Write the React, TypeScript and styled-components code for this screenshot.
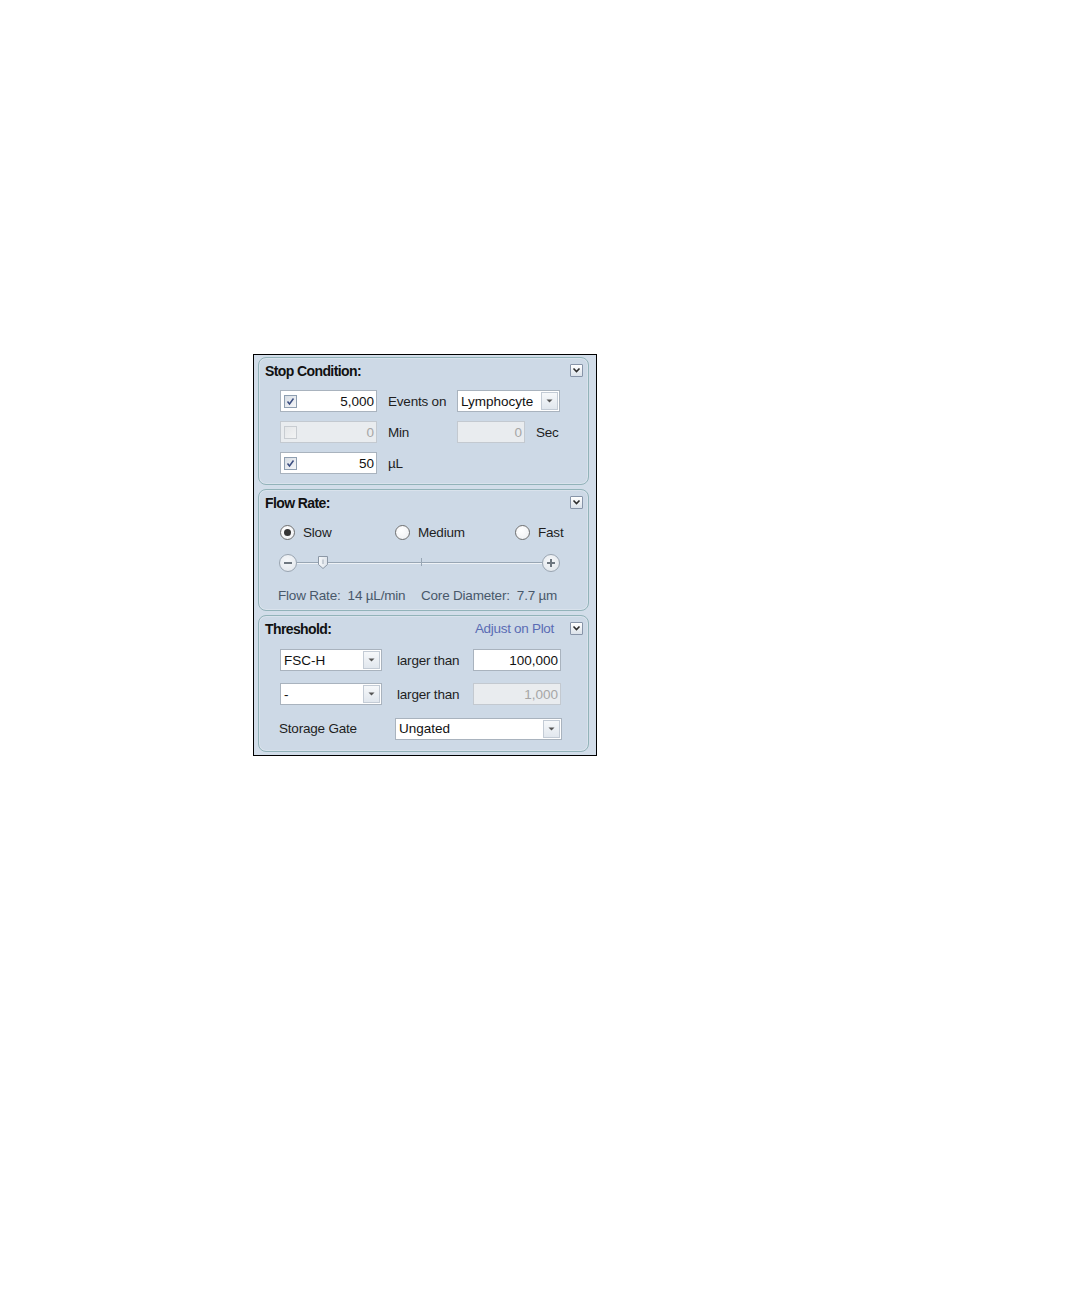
import React from 'react'
import styled, { createGlobalStyle } from 'styled-components'

const GlobalStyle = createGlobalStyle`
  html, body {
    margin: 0;
    padding: 0;
    background: #ffffff;
  }
  body {
    font-family: "Liberation Sans", Arial, sans-serif;
    font-size: 13.5px;
    color: #1e1e1e;
  }
`

const Page = styled.div`
  padding: 354px 0 0 253px;
  width: 1080px;
  height: 1296px;
  box-sizing: border-box;
`

const Panel = styled.div`
  width: 344px;
  box-sizing: border-box;
  border: 1px solid #000;
  background: #d2dde9;
  padding: 2px 7px 3px 4px;
  display: flex;
  flex-direction: column;
  gap: 4px;
`

const Section = styled.section<{ $h: number }>`
  height: ${(p) => p.$h}px;
  box-sizing: border-box;
  border: 1px solid #92b3b9;
  border-radius: 8px;
  background: #cdd9e6;
  box-shadow: inset 0 0 0 1px rgba(255, 255, 255, 0.25);
  padding: 3px 5px 0 6px;
  display: flex;
  flex-direction: column;
`

const Header = styled.div`
  height: 19px;
  display: flex;
  align-items: center;
  justify-content: space-between;
`

const Title = styled.div`
  font-size: 14px;
  font-weight: 700;
  letter-spacing: -0.6px;
  color: #111;
`

const HeaderRight = styled.div`
  display: flex;
  align-items: center;
  gap: 16px;
`

const LinkText = styled.span`
  color: #5a6cb4;
  font-size: 13.5px;
  letter-spacing: -0.3px;
`

const CollapseBtn = styled.div`
  width: 13px;
  height: 13px;
  box-sizing: border-box;
  border: 1px solid #8794a8;
  border-radius: 1px;
  background: linear-gradient(#ffffff, #dbe2ea);
  display: flex;
  align-items: center;
  justify-content: center;
`

const Rows = styled.div<{ $top: number; $gap: number }>`
  margin-top: ${(p) => p.$top}px;
  padding-left: 15px;
  display: flex;
  flex-direction: column;
  gap: ${(p) => p.$gap}px;
`

const StopRow = styled.div`
  height: 22px;
  display: grid;
  grid-template-columns: 97px 58px auto auto;
  column-gap: 11px;
  align-items: center;
  justify-content: start;
`

const Label = styled.span`
  white-space: pre;
  color: #1e1e1e;
  letter-spacing: -0.2px;
`

const TextBox = styled.div<{ $w: number; $disabled?: boolean }>`
  width: ${(p) => p.$w}px;
  height: 22px;
  box-sizing: border-box;
  border: 1px solid ${(p) => (p.$disabled ? '#c3c9d0' : '#a9b3be')};
  background: ${(p) => (p.$disabled ? '#e9ecef' : '#ffffff')};
  color: ${(p) => (p.$disabled ? '#a6a6a6' : '#111')};
  display: flex;
  align-items: center;
  padding: 0 2px 0 3px;
  gap: 4px;
`

const Value = styled.span`
  flex: 1;
  text-align: right;
`

const Check = styled.div<{ $disabled?: boolean }>`
  width: 13px;
  height: 13px;
  box-sizing: border-box;
  border: 1px solid ${(p) => (p.$disabled ? '#c8ccd1' : '#8f9fb1')};
  background: ${(p) =>
    p.$disabled ? 'linear-gradient(135deg, #e4e6e8, #f2f3f4)' : 'linear-gradient(135deg, #d7dde4, #f6f7f9)'};
  display: flex;
  align-items: center;
  justify-content: center;
`

const Combo = styled.div<{ $w: number }>`
  width: ${(p) => p.$w}px;
  height: 22px;
  box-sizing: border-box;
  border: 1px solid #a9b3be;
  background: #fff;
  display: flex;
  align-items: center;
  padding: 1px 1px 1px 3px;
  color: #111;
`

const ComboText = styled.span`
  flex: 1;
  white-space: nowrap;
`

const ComboBtn = styled.div`
  width: 17px;
  height: 18px;
  box-sizing: border-box;
  border: 1px solid #c3cbd5;
  background: linear-gradient(#f6f8fa, #e1e7ee);
  display: flex;
  align-items: center;
  justify-content: center;
`

const RadioRow = styled.div`
  margin-top: 11px;
  padding-left: 15px;
  height: 18px;
  display: grid;
  grid-template-columns: 115px 120px auto;
  align-items: center;
`

const RadioItem = styled.label`
  display: flex;
  align-items: center;
  gap: 8px;
`

const RadioCircle = styled.div<{ $on?: boolean }>`
  width: 15px;
  height: 15px;
  box-sizing: border-box;
  border-radius: 50%;
  border: 1px solid #6f6f6f;
  background: radial-gradient(circle at 40% 35%, #ffffff, #eceef1);
  display: flex;
  align-items: center;
  justify-content: center;

  &::after {
    content: '';
    display: ${(p) => (p.$on ? 'block' : 'none')};
    width: 7px;
    height: 7px;
    border-radius: 50%;
    background: #353535;
  }
`

const SliderRow = styled.div`
  margin-top: 13px;
  margin-left: 14px;
  width: 281px;
  height: 18px;
  display: flex;
  align-items: center;
`

const RoundBtn = styled.div`
  width: 18px;
  height: 18px;
  box-sizing: border-box;
  border-radius: 50%;
  border: 1px solid #9aa5b1;
  background: radial-gradient(circle at 45% 35%, #f6f8fa, #dfe4ea);
  display: flex;
  align-items: center;
  justify-content: center;
  flex: none;
`

const Track = styled.div`
  flex: 1;
  height: 2px;
  position: relative;
  background: linear-gradient(#98a6b4 50%, #eef2f6 50%);
`

const Thumb = styled.div`
  position: absolute;
  left: 20px;
  top: -7px;
`

const Tick = styled.div`
  position: absolute;
  left: 124px;
  top: -4px;
  width: 1px;
  height: 8px;
  background: #98a6b4;
`

const InfoRow = styled.div`
  margin-top: 15px;
  padding-left: 13px;
  height: 16px;
  display: flex;
  align-items: center;
`

const InfoCell = styled.span<{ $w?: number }>`
  width: ${(p) => (p.$w ? `${p.$w}px` : 'auto')};
  white-space: pre;
  color: #48586a;
  letter-spacing: -0.2px;
`

const ThreshRow = styled.div`
  height: 22px;
  display: grid;
  grid-template-columns: 102px 61px 88px;
  column-gap: 15px;
  align-items: center;
`

const GateRow = styled.div`
  height: 23px;
  display: flex;
  align-items: center;
`

const GateLabel = styled.span`
  width: 116px;
  margin-left: -1px;
  letter-spacing: -0.2px;
`

const Chevron = () => (
  <svg width="9" height="7" viewBox="0 0 9 7">
    <polyline points="1.5,1.5 4.5,4.5 7.5,1.5" fill="none" stroke="#2c2c2c" strokeWidth="1.6" />
  </svg>
)

const Arrow = () => (
  <svg width="7" height="4" viewBox="0 0 7 4">
    <polygon points="0.5,0.5 6.5,0.5 3.5,3.5" fill="#555" />
  </svg>
)

const Tick13 = () => (
  <svg width="9" height="9" viewBox="0 0 9 9">
    <polyline points="1.5,4.5 3.5,7 7.5,1.5" fill="none" stroke="#3b4d80" strokeWidth="1.5" />
  </svg>
)

const CheckBox = ({ checked, disabled }: { checked?: boolean; disabled?: boolean }) => (
  <Check $disabled={disabled}>{checked && <Tick13 />}</Check>
)

const Dropdown = ({ w, text }: { w: number; text: string }) => (
  <Combo $w={w}>
    <ComboText>{text}</ComboText>
    <ComboBtn>
      <Arrow />
    </ComboBtn>
  </Combo>
)

const Radio = ({ on, label }: { on?: boolean; label: string }) => (
  <RadioItem>
    <RadioCircle $on={on} />
    <Label>{label}</Label>
  </RadioItem>
)

const Minus = () => (
  <svg width="10" height="10" viewBox="0 0 10 10">
    <line x1="1" y1="5" x2="9" y2="5" stroke="#6e7780" strokeWidth="2" />
  </svg>
)

const Plus = () => (
  <svg width="10" height="10" viewBox="0 0 10 10">
    <line x1="1" y1="5" x2="9" y2="5" stroke="#6e7780" strokeWidth="2" />
    <line x1="5" y1="1" x2="5" y2="9" stroke="#6e7780" strokeWidth="2" />
  </svg>
)

const ThumbShape = () => (
  <svg width="12" height="15" viewBox="0 0 12 15">
    <defs>
      <linearGradient id="tg" x1="0" y1="0" x2="1" y2="0">
        <stop offset="0" stopColor="#f7f9fb" />
        <stop offset="1" stopColor="#dde3ea" />
      </linearGradient>
    </defs>
    <path d="M1.5 1.5 H10.5 V9.5 L6 13.5 L1.5 9.5 Z" fill="url(#tg)" stroke="#8c98a6" strokeWidth="1" />
    <line x1="6" y1="4.5" x2="6" y2="9" stroke="#a5afba" strokeWidth="1" />
  </svg>
)

export default function App() {
  return (
    <Page>
      <GlobalStyle />
      <Panel>
        <Section $h={128}>
          <Header>
            <Title>Stop Condition:</Title>
            <CollapseBtn>
              <Chevron />
            </CollapseBtn>
          </Header>
          <Rows $top={10} $gap={9}>
            <StopRow>
              <TextBox $w={97}>
                <CheckBox checked />
                <Value>5,000</Value>
              </TextBox>
              <Label>Events on</Label>
              <Dropdown w={103} text="Lymphocyte" />
            </StopRow>
            <StopRow>
              <TextBox $w={97} $disabled>
                <CheckBox disabled />
                <Value>0</Value>
              </TextBox>
              <Label>Min</Label>
              <TextBox $w={68} $disabled>
                <Value>0</Value>
              </TextBox>
              <Label>Sec</Label>
            </StopRow>
            <StopRow>
              <TextBox $w={97}>
                <CheckBox checked />
                <Value>50</Value>
              </TextBox>
              <Label>µL</Label>
            </StopRow>
          </Rows>
        </Section>

        <Section $h={122}>
          <Header>
            <Title>Flow Rate:</Title>
            <CollapseBtn>
              <Chevron />
            </CollapseBtn>
          </Header>
          <RadioRow>
            <Radio on label="Slow" />
            <Radio label="Medium" />
            <Radio label="Fast" />
          </RadioRow>
          <SliderRow>
            <RoundBtn>
              <Minus />
            </RoundBtn>
            <Track>
              <Tick />
              <Thumb>
                <ThumbShape />
              </Thumb>
            </Track>
            <RoundBtn>
              <Plus />
            </RoundBtn>
          </SliderRow>
          <InfoRow>
            <InfoCell $w={143}>{'Flow Rate:  14 µL/min'}</InfoCell>
            <InfoCell>{'Core Diameter:  7.7 µm'}</InfoCell>
          </InfoRow>
        </Section>

        <Section $h={137}>
          <Header>
            <Title>Threshold:</Title>
            <HeaderRight>
              <LinkText>Adjust on Plot</LinkText>
              <CollapseBtn>
                <Chevron />
              </CollapseBtn>
            </HeaderRight>
          </Header>
          <Rows $top={11} $gap={12}>
            <ThreshRow>
              <Dropdown w={102} text="FSC-H" />
              <Label>larger than</Label>
              <TextBox $w={88}>
                <Value>100,000</Value>
              </TextBox>
            </ThreshRow>
            <ThreshRow>
              <Dropdown w={102} text="-" />
              <Label>larger than</Label>
              <TextBox $w={88} $disabled>
                <Value>1,000</Value>
              </TextBox>
            </ThreshRow>
            <GateRow>
              <GateLabel>Storage Gate</GateLabel>
              <Dropdown w={167} text="Ungated" />
            </GateRow>
          </Rows>
        </Section>
      </Panel>
    </Page>
  )
}
